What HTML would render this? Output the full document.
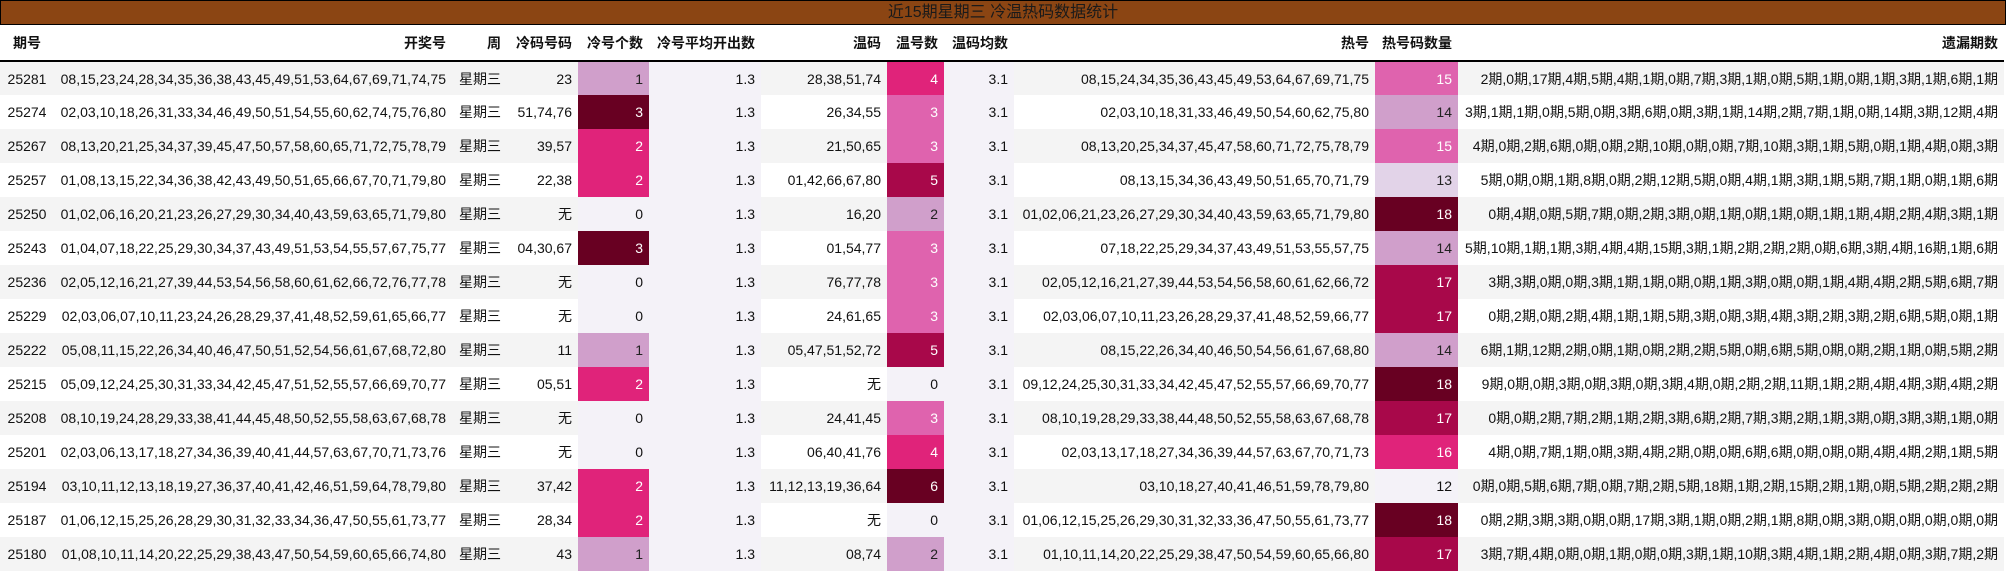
<!DOCTYPE html>
<html><head><meta charset="utf-8">
<style>
*{margin:0;padding:0;box-sizing:border-box}
html,body{width:2006px;height:573px;background:#fff;overflow:hidden}
body{font-family:"Liberation Sans","Noto Sans CJK SC",sans-serif;font-size:14px;color:#111}
.title{position:absolute;left:0;top:0;width:2006px;height:25px;background:#8B4513;border:1px solid #000;text-align:center;line-height:23px;font-size:16px;color:#1a1a1a}
table{position:absolute;left:0;top:25px;width:2004px;border-collapse:collapse;table-layout:fixed}
th{height:36px;font-weight:bold;text-align:right;padding-right:6px;border-bottom:2px solid #000;white-space:nowrap;background:#fff}
td{height:34px;text-align:right;padding-right:6px;white-space:nowrap;overflow:hidden}
tr.g td{background:#f4f4f4}
tr td.l{background:#f4f2f8}
tr td.a{background:#d09fcb;color:#222}
tr td.b{background:#e0237a;color:#fff}
tr td.c{background:#680022;color:#fff}
tr td.d{background:#df63ae;color:#fff}
tr td.e{background:#a8084a;color:#fff}
tr td.f{background:#e2d3e8;color:#222}
td:first-child,th:first-child{text-align:center;padding-right:0}
</style></head><body>
<div class="title">近15期星期三 冷温热码数据统计</div>
<table>
<colgroup><col style="width:54px"><col style="width:398px"><col style="width:55px"><col style="width:71px"><col style="width:71px"><col style="width:112px"><col style="width:126px"><col style="width:57px"><col style="width:70px"><col style="width:361px"><col style="width:83px"><col style="width:546px"></colgroup>
<tr><th>期号</th><th>开奖号</th><th>周</th><th>冷码号码</th><th>冷号个数</th><th>冷号平均开出数</th><th>温码</th><th>温号数</th><th>温码均数</th><th>热号</th><th>热号码数量</th><th>遗漏期数</th></tr>
<tr class="g"><td>25281</td><td>08,15,23,24,28,34,35,36,38,43,45,49,51,53,64,67,69,71,74,75</td><td>星期三</td><td>23</td><td class="a">1</td><td class="l">1.3</td><td>28,38,51,74</td><td class="b">4</td><td class="l">3.1</td><td>08,15,24,34,35,36,43,45,49,53,64,67,69,71,75</td><td class="d">15</td><td>2期,0期,17期,4期,5期,4期,1期,0期,7期,3期,1期,0期,5期,1期,0期,1期,3期,1期,6期,1期</td></tr>
<tr><td>25274</td><td>02,03,10,18,26,31,33,34,46,49,50,51,54,55,60,62,74,75,76,80</td><td>星期三</td><td>51,74,76</td><td class="c">3</td><td class="l">1.3</td><td>26,34,55</td><td class="d">3</td><td class="l">3.1</td><td>02,03,10,18,31,33,46,49,50,54,60,62,75,80</td><td class="a">14</td><td>3期,1期,1期,0期,5期,0期,3期,6期,0期,3期,1期,14期,2期,7期,1期,0期,14期,3期,12期,4期</td></tr>
<tr class="g"><td>25267</td><td>08,13,20,21,25,34,37,39,45,47,50,57,58,60,65,71,72,75,78,79</td><td>星期三</td><td>39,57</td><td class="b">2</td><td class="l">1.3</td><td>21,50,65</td><td class="d">3</td><td class="l">3.1</td><td>08,13,20,25,34,37,45,47,58,60,71,72,75,78,79</td><td class="d">15</td><td>4期,0期,2期,6期,0期,0期,2期,10期,0期,0期,7期,10期,3期,1期,5期,0期,1期,4期,0期,3期</td></tr>
<tr><td>25257</td><td>01,08,13,15,22,34,36,38,42,43,49,50,51,65,66,67,70,71,79,80</td><td>星期三</td><td>22,38</td><td class="b">2</td><td class="l">1.3</td><td>01,42,66,67,80</td><td class="e">5</td><td class="l">3.1</td><td>08,13,15,34,36,43,49,50,51,65,70,71,79</td><td class="f">13</td><td>5期,0期,0期,1期,8期,0期,2期,12期,5期,0期,4期,1期,3期,1期,5期,7期,1期,0期,1期,6期</td></tr>
<tr class="g"><td>25250</td><td>01,02,06,16,20,21,23,26,27,29,30,34,40,43,59,63,65,71,79,80</td><td>星期三</td><td>无</td><td class="l">0</td><td class="l">1.3</td><td>16,20</td><td class="a">2</td><td class="l">3.1</td><td>01,02,06,21,23,26,27,29,30,34,40,43,59,63,65,71,79,80</td><td class="c">18</td><td>0期,4期,0期,5期,7期,0期,2期,3期,0期,1期,0期,1期,0期,1期,1期,4期,2期,4期,3期,1期</td></tr>
<tr><td>25243</td><td>01,04,07,18,22,25,29,30,34,37,43,49,51,53,54,55,57,67,75,77</td><td>星期三</td><td>04,30,67</td><td class="c">3</td><td class="l">1.3</td><td>01,54,77</td><td class="d">3</td><td class="l">3.1</td><td>07,18,22,25,29,34,37,43,49,51,53,55,57,75</td><td class="a">14</td><td>5期,10期,1期,1期,3期,4期,4期,15期,3期,1期,2期,2期,2期,0期,6期,3期,4期,16期,1期,6期</td></tr>
<tr class="g"><td>25236</td><td>02,05,12,16,21,27,39,44,53,54,56,58,60,61,62,66,72,76,77,78</td><td>星期三</td><td>无</td><td class="l">0</td><td class="l">1.3</td><td>76,77,78</td><td class="d">3</td><td class="l">3.1</td><td>02,05,12,16,21,27,39,44,53,54,56,58,60,61,62,66,72</td><td class="e">17</td><td>3期,3期,0期,0期,3期,1期,1期,0期,0期,1期,3期,0期,0期,1期,4期,4期,2期,5期,6期,7期</td></tr>
<tr><td>25229</td><td>02,03,06,07,10,11,23,24,26,28,29,37,41,48,52,59,61,65,66,77</td><td>星期三</td><td>无</td><td class="l">0</td><td class="l">1.3</td><td>24,61,65</td><td class="d">3</td><td class="l">3.1</td><td>02,03,06,07,10,11,23,26,28,29,37,41,48,52,59,66,77</td><td class="e">17</td><td>0期,2期,0期,2期,4期,1期,1期,5期,3期,0期,3期,4期,3期,2期,3期,2期,6期,5期,0期,1期</td></tr>
<tr class="g"><td>25222</td><td>05,08,11,15,22,26,34,40,46,47,50,51,52,54,56,61,67,68,72,80</td><td>星期三</td><td>11</td><td class="a">1</td><td class="l">1.3</td><td>05,47,51,52,72</td><td class="e">5</td><td class="l">3.1</td><td>08,15,22,26,34,40,46,50,54,56,61,67,68,80</td><td class="a">14</td><td>6期,1期,12期,2期,0期,1期,0期,2期,2期,5期,0期,6期,5期,0期,0期,2期,1期,0期,5期,2期</td></tr>
<tr><td>25215</td><td>05,09,12,24,25,30,31,33,34,42,45,47,51,52,55,57,66,69,70,77</td><td>星期三</td><td>05,51</td><td class="b">2</td><td class="l">1.3</td><td>无</td><td class="l">0</td><td class="l">3.1</td><td>09,12,24,25,30,31,33,34,42,45,47,52,55,57,66,69,70,77</td><td class="c">18</td><td>9期,0期,0期,3期,0期,3期,0期,3期,4期,0期,2期,2期,11期,1期,2期,4期,4期,3期,4期,2期</td></tr>
<tr class="g"><td>25208</td><td>08,10,19,24,28,29,33,38,41,44,45,48,50,52,55,58,63,67,68,78</td><td>星期三</td><td>无</td><td class="l">0</td><td class="l">1.3</td><td>24,41,45</td><td class="d">3</td><td class="l">3.1</td><td>08,10,19,28,29,33,38,44,48,50,52,55,58,63,67,68,78</td><td class="e">17</td><td>0期,0期,2期,7期,2期,1期,2期,3期,6期,2期,7期,3期,2期,1期,3期,0期,3期,3期,1期,0期</td></tr>
<tr><td>25201</td><td>02,03,06,13,17,18,27,34,36,39,40,41,44,57,63,67,70,71,73,76</td><td>星期三</td><td>无</td><td class="l">0</td><td class="l">1.3</td><td>06,40,41,76</td><td class="b">4</td><td class="l">3.1</td><td>02,03,13,17,18,27,34,36,39,44,57,63,67,70,71,73</td><td class="b">16</td><td>4期,0期,7期,1期,0期,3期,4期,2期,0期,0期,6期,6期,0期,0期,0期,4期,4期,2期,1期,5期</td></tr>
<tr class="g"><td>25194</td><td>03,10,11,12,13,18,19,27,36,37,40,41,42,46,51,59,64,78,79,80</td><td>星期三</td><td>37,42</td><td class="b">2</td><td class="l">1.3</td><td>11,12,13,19,36,64</td><td class="c">6</td><td class="l">3.1</td><td>03,10,18,27,40,41,46,51,59,78,79,80</td><td class="l">12</td><td>0期,0期,5期,6期,7期,0期,7期,2期,5期,18期,1期,2期,15期,2期,1期,0期,5期,2期,2期,2期</td></tr>
<tr><td>25187</td><td>01,06,12,15,25,26,28,29,30,31,32,33,34,36,47,50,55,61,73,77</td><td>星期三</td><td>28,34</td><td class="b">2</td><td class="l">1.3</td><td>无</td><td class="l">0</td><td class="l">3.1</td><td>01,06,12,15,25,26,29,30,31,32,33,36,47,50,55,61,73,77</td><td class="c">18</td><td>0期,2期,3期,3期,0期,0期,17期,3期,1期,0期,2期,1期,8期,0期,3期,0期,0期,0期,0期,0期</td></tr>
<tr class="g"><td>25180</td><td>01,08,10,11,14,20,22,25,29,38,43,47,50,54,59,60,65,66,74,80</td><td>星期三</td><td>43</td><td class="a">1</td><td class="l">1.3</td><td>08,74</td><td class="a">2</td><td class="l">3.1</td><td>01,10,11,14,20,22,25,29,38,47,50,54,59,60,65,66,80</td><td class="e">17</td><td>3期,7期,4期,0期,0期,1期,0期,0期,3期,1期,10期,3期,4期,1期,2期,4期,0期,3期,7期,2期</td></tr>
</table>
</body></html>
